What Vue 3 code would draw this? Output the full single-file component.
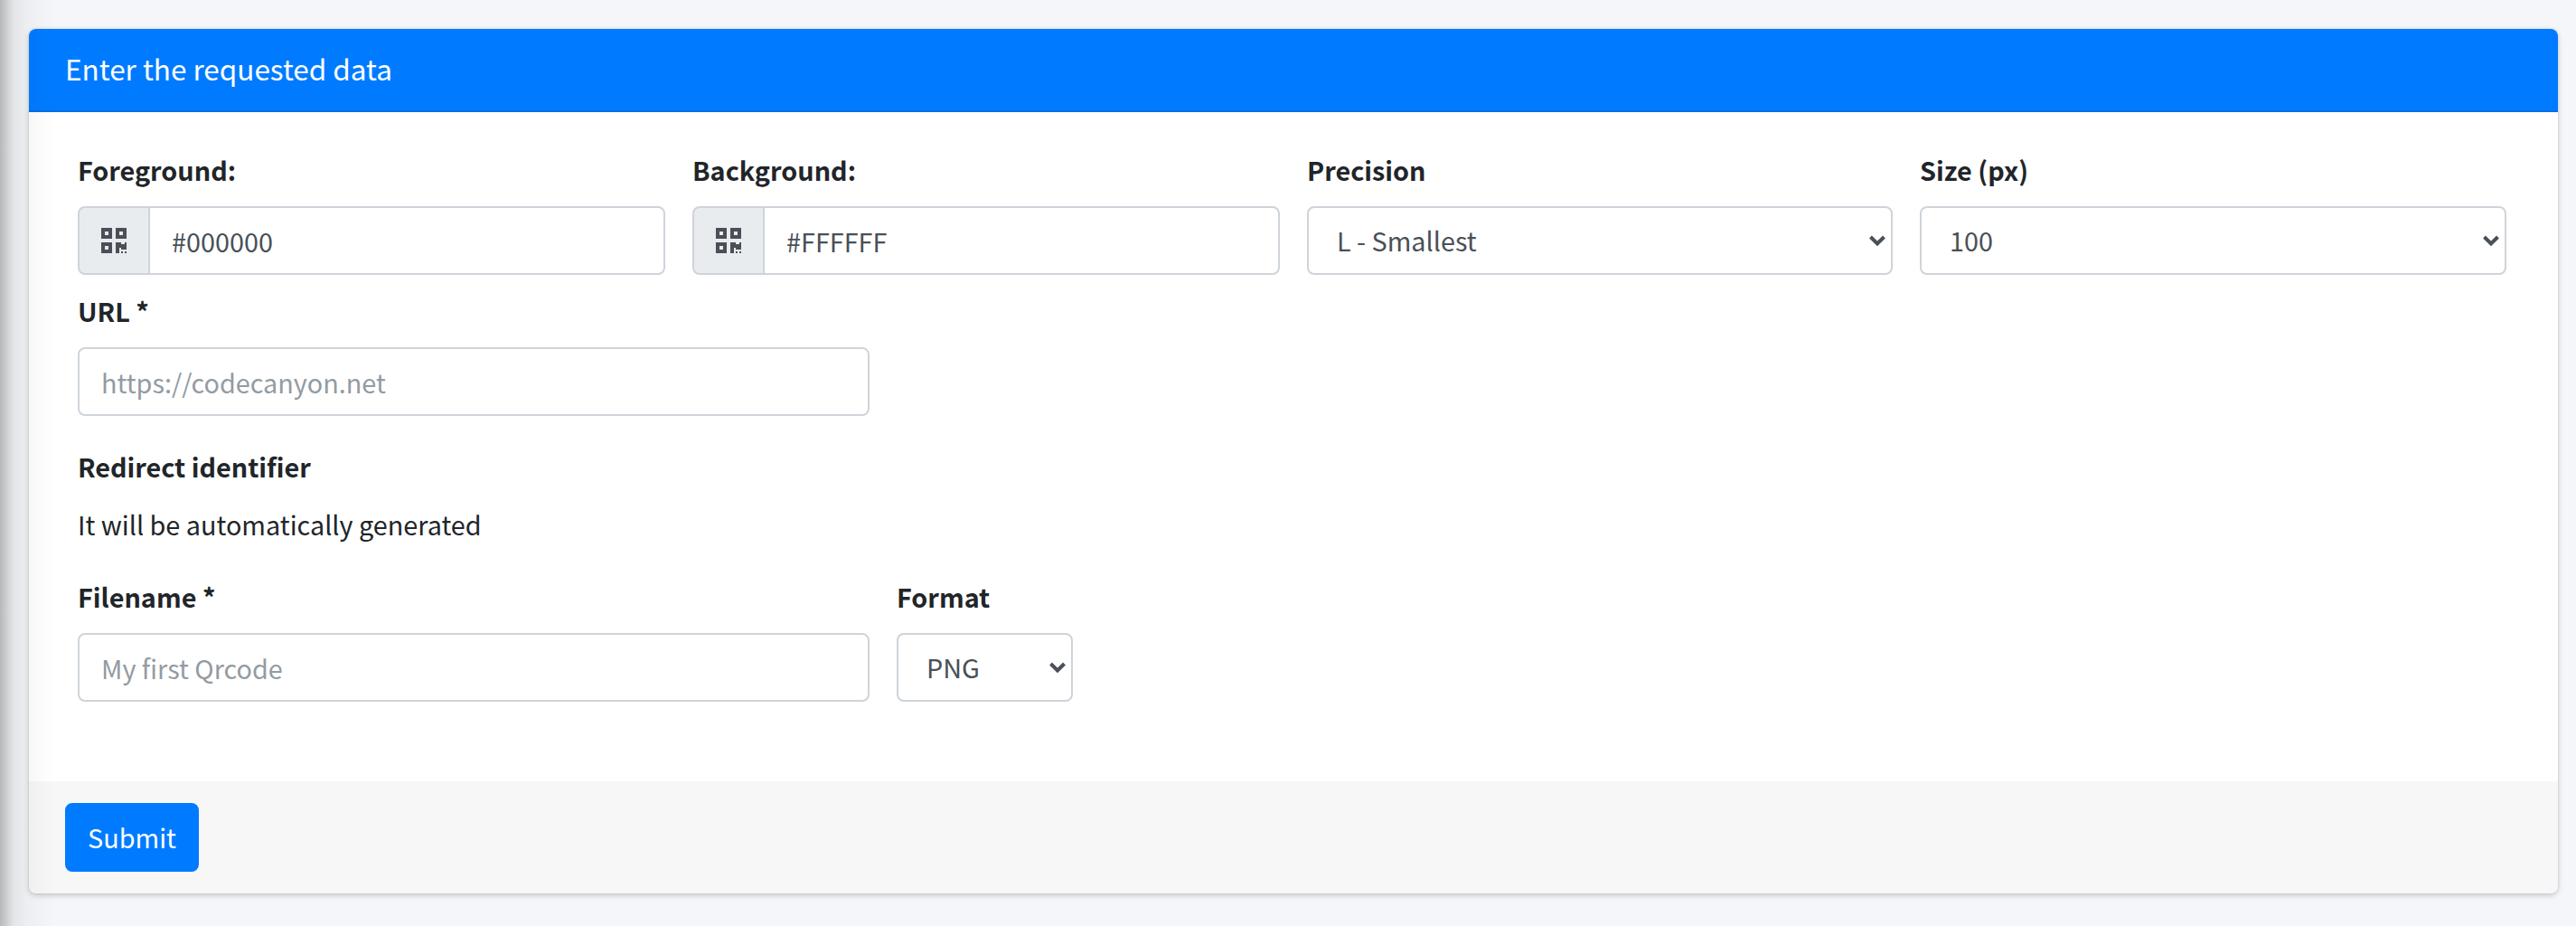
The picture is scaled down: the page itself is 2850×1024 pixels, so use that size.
<script setup>
const precision = ['L - Smallest', 'M - Medium', 'Q - High', 'H - Best']
const sizes = [100, 200, 300, 400, 500]
const formats = ['PNG', 'JPG', 'SVG']
</script>

<template>
  <div class="page">
    <div class="side-shadow"></div>
    <section class="card">
      <header class="card-head">Enter the requested data</header>
      <form class="card-body" @submit.prevent>
        <div class="row four">
          <div class="field">
            <label>Foreground:</label>
            <div class="group">
              <span class="addon">
                <svg viewBox="0 32 448 448" width="28" height="28"><path fill="currentColor" d="M0 224h192V32H0v192zM64 96h64v64H64V96zm192-64v192h192V32H256zm128 128h-64V96h64v64zM0 480h192V288H0v192zm64-128h64v64H64v-64zm352-64h32v128h-96v-32h-32v96h-64V288h96v32h64v-32zm0 160h32v32h-32v-32zm-64 0h32v32h-32v-32z"/></svg>
              </span>
              <input class="control joined" type="text" value="#000000" />
            </div>
          </div>
          <div class="field">
            <label>Background:</label>
            <div class="group">
              <span class="addon">
                <svg viewBox="0 32 448 448" width="28" height="28"><path fill="currentColor" d="M0 224h192V32H0v192zM64 96h64v64H64V96zm192-64v192h192V32H256zm128 128h-64V96h64v64zM0 480h192V288H0v192zm64-128h64v64H64v-64zm352-64h32v128h-96v-32h-32v96h-64V288h96v32h64v-32zm0 160h32v32h-32v-32zm-64 0h32v32h-32v-32z"/></svg>
              </span>
              <input class="control joined" type="text" value="#FFFFFF" />
            </div>
          </div>
          <div class="field">
            <label>Precision</label>
            <div class="select-wrap">
              <select class="control select">
                <option v-for="p in precision" :key="p">{{ p }}</option>
              </select>
              <svg class="chev" viewBox="0 0 20 14" width="20" height="14"><path d="M2.5 3 10 10.5 17.5 3" fill="none" stroke="currentColor" stroke-width="4"/></svg>
            </div>
          </div>
          <div class="field">
            <label>Size (px)</label>
            <div class="select-wrap">
              <select class="control select">
                <option v-for="s in sizes" :key="s">{{ s }}</option>
              </select>
              <svg class="chev" viewBox="0 0 20 14" width="20" height="14"><path d="M2.5 3 10 10.5 17.5 3" fill="none" stroke="currentColor" stroke-width="4"/></svg>
            </div>
          </div>
        </div>

        <div class="row single">
          <div class="field">
            <label>URL *</label>
            <input class="control" type="text" placeholder="https://codecanyon.net" />
          </div>
        </div>

        <div class="block">
          <label>Redirect identifier</label>
          <p class="note">It will be automatically generated</p>
        </div>

        <div class="row pair">
          <div class="field">
            <label>Filename *</label>
            <input class="control" type="text" placeholder="My first Qrcode" />
          </div>
          <div class="field">
            <label>Format</label>
            <div class="select-wrap">
              <select class="control select">
                <option v-for="f in formats" :key="f">{{ f }}</option>
              </select>
              <svg class="chev" viewBox="0 0 20 14" width="20" height="14"><path d="M2.5 3 10 10.5 17.5 3" fill="none" stroke="currentColor" stroke-width="4"/></svg>
            </div>
          </div>
        </div>
      </form>
      <footer class="card-foot">
        <button class="btn" type="button">Submit</button>
      </footer>
    </section>
  </div>
</template>

<style>
html, body {
  margin: 0;
  background: #f4f6f9;
}
</style>

<style scoped>
.page {
  position: relative;
  box-sizing: border-box;
  width: 2850px;
  height: 1024px;
  padding: 32px 20px 36px 32px;
  overflow: hidden;
  background: #f4f6f9;
  font-family: "Noto Sans CJK SC", "Noto Sans", sans-serif;
  font-size: 28.8px;
  line-height: 48px;
  color: #212529;
}
.side-shadow {
  position: absolute;
  left: 0;
  top: 0;
  bottom: 0;
  width: 60px;
  pointer-events: none;
  z-index: 2;
  background: linear-gradient(to right, rgba(0,0,0,.25), rgba(0,0,0,.07) 25%, rgba(0,0,0,.03) 50%, rgba(0,0,0,0));
}
.card {
  display: flex;
  flex-direction: column;
  height: 956px;
  background: #fff;
  border-radius: 8px;
  box-shadow: 0 0 2px rgba(0,0,0,.125), 0 2px 6px rgba(0,0,0,.2);
  overflow: hidden;
}
.card-head {
  box-sizing: border-box;
  height: 92px;
  padding: 19px 40px;
  background: #007bff;
  border-bottom: 2px solid #006ee5;
  color: #fff;
  font-size: 31.5px;
}
.card-body {
  flex: 1;
  box-sizing: border-box;
  padding: 40px 54px 0;
}
.row {
  display: grid;
  column-gap: 30px;
  margin-bottom: 16px;
}
.four { grid-template-columns: 650px 650px 648px 649px; }
.single { grid-template-columns: 876px; margin-bottom: 32px; }
.pair { grid-template-columns: 876px 195px; }
.block { margin-bottom: 32px; }
label {
  display: block;
  margin-bottom: 16px;
  font-weight: 700;
}
.note { margin: 0; }
.group { display: flex; }
.addon {
  box-sizing: border-box;
  flex: 0 0 80px;
  height: 76px;
  display: flex;
  align-items: center;
  justify-content: center;
  background: #e9ecef;
  border: 2px solid #ced4da;
  border-radius: 8px 0 0 8px;
  color: #495057;
}
.control {
  display: block;
  box-sizing: border-box;
  width: 100%;
  height: 76px;
  padding: 12px 24px;
  border: 2px solid #ced4da;
  border-radius: 8px;
  background: #fff;
  color: #495057;
  font: inherit;
  outline: none;
}
.control::placeholder {
  color: #939ba2;
  opacity: 1;
}
.joined {
  flex: 1;
  min-width: 0;
  margin-left: -2px;
  border-radius: 0 8px 8px 0;
}
.select-wrap { position: relative; }
.select {
  appearance: none;
  padding-left: 31px;
  padding-right: 44px;
}
.chev {
  position: absolute;
  right: 7px;
  top: 31px;
  color: #495057;
  pointer-events: none;
}
.card-foot {
  box-sizing: border-box;
  height: 124px;
  padding: 24px 40px;
  background: #f7f7f7;
}
.btn {
  box-sizing: border-box;
  width: 148px;
  height: 76px;
  padding: 0;
  border: 2px solid #007bff;
  border-radius: 8px;
  background: #007bff;
  color: #fff;
  font: inherit;
}
</style>
